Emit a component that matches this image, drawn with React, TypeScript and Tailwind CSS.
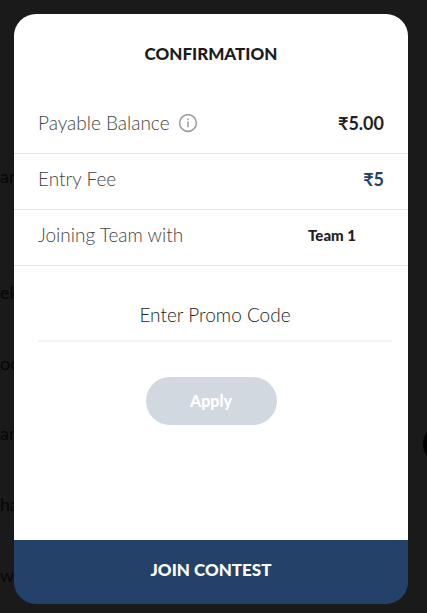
/**
 * ContestConfirmation — the dialog shown before a team joins a contest.
 *
 * The contest list stays behind it, darkened, so only the ends of its names
 * and the edge of the round action show around the card.
 */

import type { ReactNode } from "react";

const behind = [
  { name: "ar", place: "top-[164px]" },
  { name: "ek", place: "top-[280px]" },
  { name: "oo", place: "top-[351px]" },
  { name: "an", place: "top-[421px]" },
  { name: "ha", place: "top-[492px]" },
  { name: "we", place: "top-[563px]" },
];

function Backdrop() {
  return (
    <div className="absolute inset-0 overflow-hidden text-lg leading-6 text-[#060606]" aria-hidden="true">
      {behind.map((row) => (
        <span key={row.name} className={`absolute left-0 ${row.place}`}>
          {row.name}
        </span>
      ))}
      <span className="absolute top-[424px] -right-9 size-10 rounded-full bg-black" />
    </div>
  );
}

function InfoIcon() {
  return (
    <svg viewBox="0 0 20 20" className="size-5" fill="none" stroke="#a0a0a0" strokeWidth="1.6" aria-hidden="true">
      <circle cx="10" cy="10" r="8.4" />
      <path d="M10 8.6v5.6" />
      <path d="M10 5.6v1.6" />
    </svg>
  );
}

function Row({ label, info, children }: { label: string; info?: boolean; children: ReactNode }) {
  return (
    <div className="flex h-14 items-center justify-between border-b border-[#e4e4e4] px-6 pb-1.5">
      <dt className="flex items-center gap-2 text-[19px] leading-6 font-light text-[#444444]">
        {label}
        {info && (
          <button type="button" aria-label={`About ${label}`}>
            <InfoIcon />
          </button>
        )}
      </dt>
      {children}
    </div>
  );
}

export default function App() {
  return (
    <div className="relative flex min-h-screen flex-col bg-[#1a1a1a] pt-3.5 pr-[19px] pb-[9px] pl-3.5 font-['Lato','Noto_Sans',sans-serif]">
      <Backdrop />
      <main
        role="dialog"
        aria-labelledby="confirmation-title"
        className="relative flex flex-1 flex-col overflow-hidden rounded-[22px]"
      >
        <div className="flex-1 bg-white pb-8">
          <h1 id="confirmation-title" className="pt-7 pb-8 text-center text-[17px] leading-6 font-black text-[#1c1c1c]">
            CONFIRMATION
          </h1>

          <dl>
            <Row label="Payable Balance" info>
              <dd className="text-lg leading-6 font-bold text-[#222222]">₹5.00</dd>
            </Row>
            <Row label="Entry Fee">
              <dd className="text-lg leading-6 font-bold text-[#24416a]">₹5</dd>
            </Row>
            <Row label="Joining Team with">
              <dd className="pr-7 text-[15px] leading-6 font-black text-[#222222]">Team 1</dd>
            </Row>
          </dl>

          <form className="flex flex-col items-center pt-9 pr-4 pl-6">
            <input
              type="text"
              aria-label="Promo code"
              placeholder="Enter Promo Code"
              className="h-10 w-full border-b-2 border-[#f4f4f4] pb-3.5 text-center text-[19px] leading-6 font-light text-[#222222] outline-none placeholder:text-[#222222] placeholder:opacity-100"
            />
            <button
              type="button"
              className="mt-[35px] mr-2 h-12 w-[131px] rounded-full bg-[#d2d8e0] text-base leading-6 font-black text-white"
            >
              Apply
            </button>
          </form>
        </div>

        <button type="button" className="h-16 w-full bg-[#24416a] pb-1 text-[17px] leading-6 font-black text-white">
          JOIN CONTEST
        </button>
      </main>
    </div>
  );
}
